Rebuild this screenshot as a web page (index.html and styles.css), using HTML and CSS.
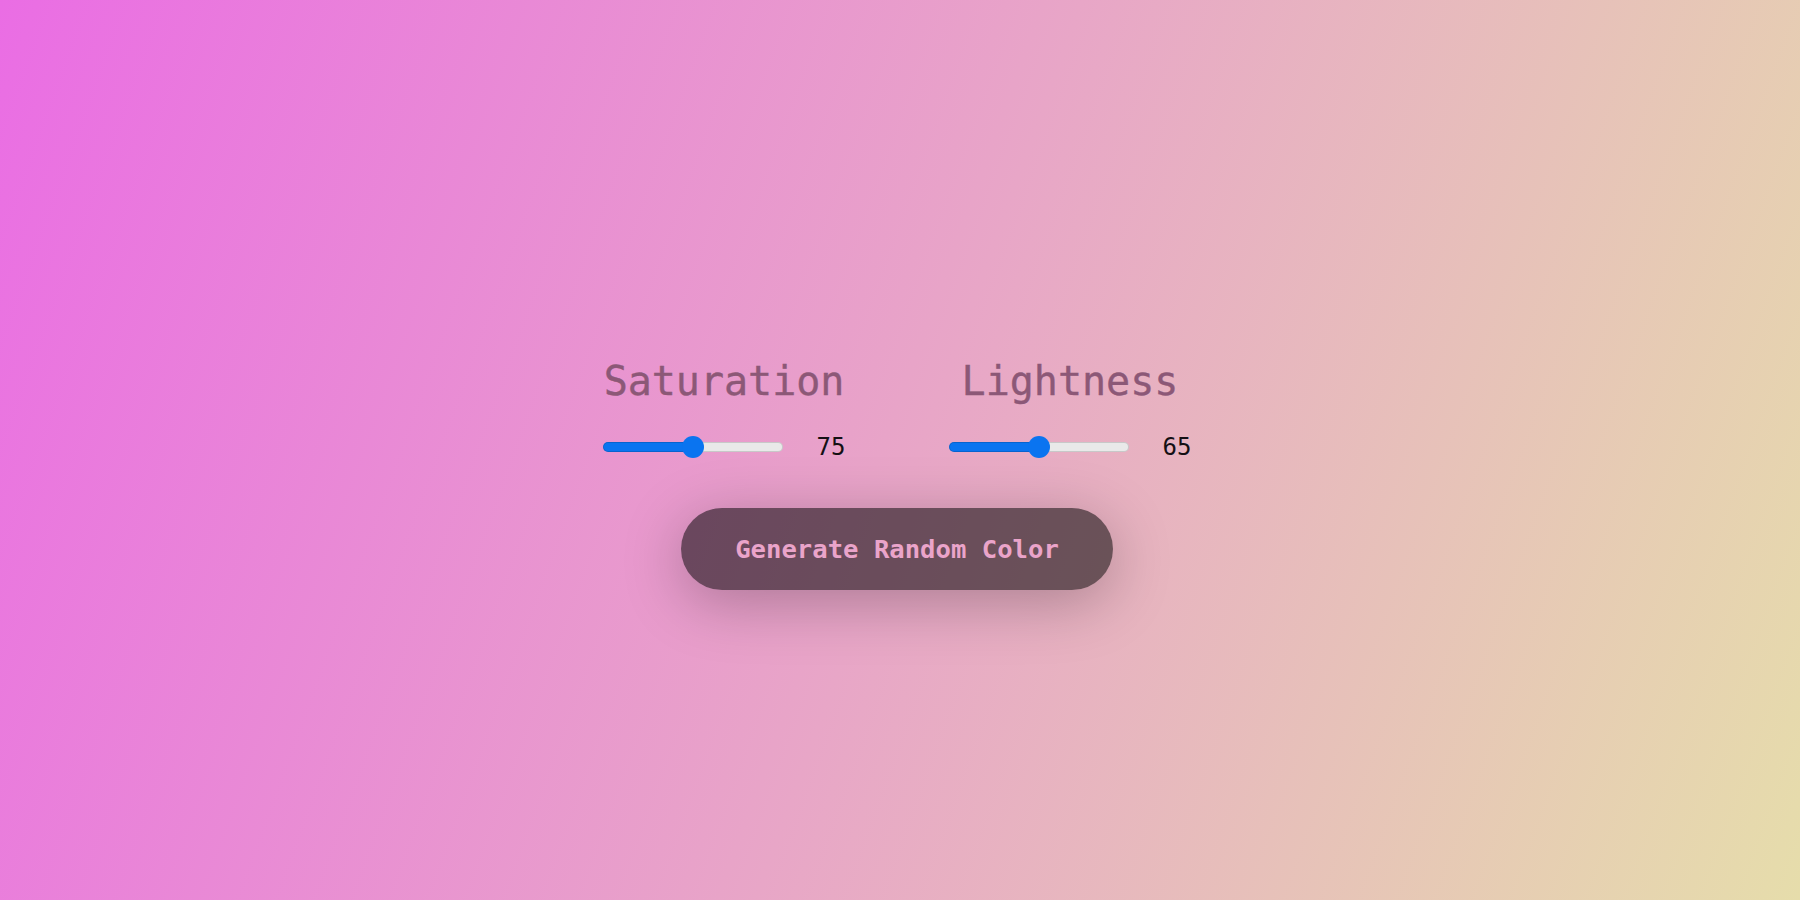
FILE: index.html
```html
<!DOCTYPE html>
<html lang="en">
<head>
<meta charset="utf-8">
<title>Random Color</title>
<link rel="stylesheet" href="styles.css">
</head>
<body>
<main class="app">
  <div class="controls">
    <div class="control">
      <label class="control-label" for="sat">Saturation</label>
      <div class="control-row">
        <input class="slider" id="sat" type="range" min="50" max="100" value="75" style="--fill:50%">
        <span class="control-value">75</span>
      </div>
    </div>
    <div class="control">
      <label class="control-label" for="light">Lightness</label>
      <div class="control-row">
        <input class="slider" id="light" type="range" min="30" max="100" value="65" style="--fill:50%">
        <span class="control-value">65</span>
      </div>
    </div>
  </div>
  <button class="generate-btn" type="button">Generate Random Color</button>
</main>
</body>
</html>
```

FILE: styles.css
```css
html, body {
  margin: 0;
  padding: 0;
  height: 100%;
}

body {
  background: linear-gradient(110deg, #ea6de4 0%, #e6ddab 100%);
  font-family: "DejaVu Sans Mono", "Liberation Mono", monospace;
  overflow: hidden;
}

.app {
  box-sizing: border-box;
  height: 100vh;
  display: flex;
  flex-direction: column;
  align-items: center;
  justify-content: center;
  padding-top: 46px;
  padding-right: 6px;
}

.controls {
  display: flex;
  gap: 103px;
}

.control {
  display: flex;
  flex-direction: column;
  align-items: center;
}

.control-label {
  font-size: 40px;
  line-height: 48px;
  color: #8c5877;
  margin-bottom: 27px;
  -webkit-text-stroke: 0.4px #8c5877;
}

.control-row {
  display: flex;
  align-items: center;
  gap: 34px;
  height: 30px;
}

.control-value {
  font-size: 24px;
  line-height: 30px;
  color: #141014;
}

.slider {
  -webkit-appearance: none;
  appearance: none;
  width: 180px;
  height: 22px;
  margin: 0;
  background: transparent;
}

.slider::-webkit-slider-runnable-track {
  height: 10px;
  border-radius: 5px;
  background: linear-gradient(to right, #0a74f0 var(--fill), #e9e9e9 var(--fill));
  box-shadow: inset 0 0 0 1px rgba(0, 0, 0, 0.14);
}

.slider::-webkit-slider-thumb {
  -webkit-appearance: none;
  appearance: none;
  width: 22px;
  height: 22px;
  margin-top: -6px;
  border-radius: 50%;
  background: #0a74f0;
  border: none;
}

.generate-btn {
  margin-top: 46px;
  height: 82px;
  padding: 0 54px;
  border: none;
  border-radius: 41px;
  background: rgba(0, 0, 0, 0.54);
  color: #eaa4ca;
  font-family: "DejaVu Sans Mono", "Liberation Mono", monospace;
  font-weight: bold;
  font-size: 25.6px;
  box-shadow: 0 12px 60px rgba(0, 0, 0, 0.26);
  cursor: pointer;
}
```
